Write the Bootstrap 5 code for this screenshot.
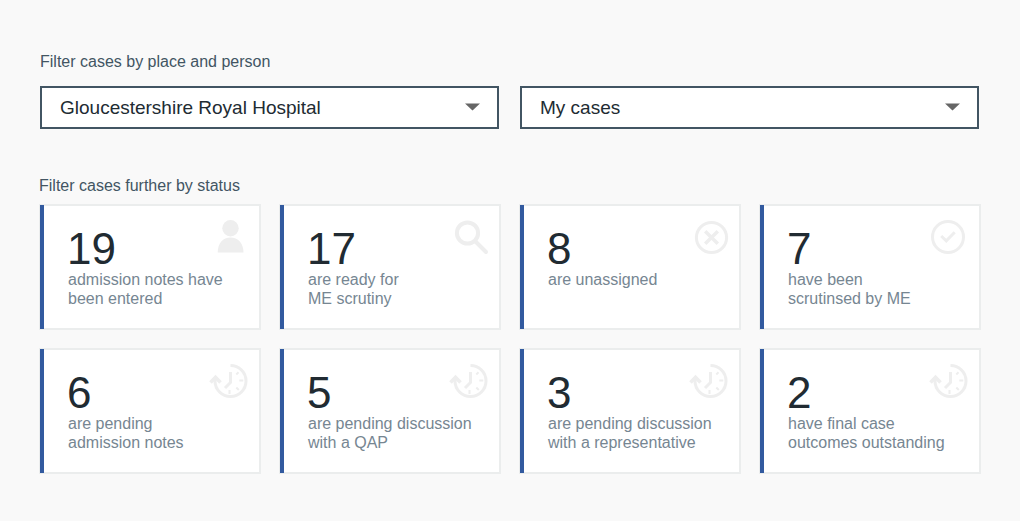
<!DOCTYPE html>
<html lang="en">
<head>
<meta charset="utf-8">
<meta name="viewport" content="width=device-width, initial-scale=1">
<title>Case filters</title>
<link href="https://cdn.jsdelivr.net/npm/bootstrap@5.3.0/dist/css/bootstrap.min.css" rel="stylesheet">
<style>
  body { background: #f9f9f9; font-family: "Liberation Sans", Arial, sans-serif; color: #425563; }
  .page { padding: 50px 39px 47px; }
  .filters { padding: 0 2px 0 1px; margin-bottom: 45px; }
  .filter-row { display: grid; grid-template-columns: 1fr 1fr; gap: 21px; margin-top: 12px; }
  .filter-title { display: block; margin: 0; font-size: 16px; line-height: 24px; font-weight: 400; }
  .case-select {
    height: 43px; padding: 0 48px 0 18px; border: 2px solid #425563; border-radius: 0;
    font-size: 19px; line-height: 24px; color: #212b32; background-color: #fff;
    background-image: url("data:image/svg+xml,%3Csvg xmlns='http://www.w3.org/2000/svg' viewBox='0 0 15 8'%3E%3Cpath fill='%23666' d='M0 .5h15L7.5 7.5z'/%3E%3C/svg%3E");
    background-size: 15px 8px; background-position: right 17px top 15px;
  }
  .status-grid { display: grid; grid-template-columns: repeat(4, 1fr); gap: 18px; margin-top: 6px; }
  .status-card {
    min-height: 126px; padding: 14px 10px 20px 27px; background: #fff;
    border: 2px solid #ebeded; color: #768692; font-size: 16px; line-height: 19px;
  }
  .status-card::before { content: ""; position: absolute; left: -1px; top: -1px; bottom: -1px; width: 4px; background: #325a9f; }
  .status-count { margin: 7px 0 0 -1px; font-size: 44px; line-height: 43px; color: #212b32; }
  .status-icon { width: 40px; height: 36px; color: #eee; }
  @media (max-width: 900px) { .status-grid { grid-template-columns: 1fr 1fr; } }
  @media (max-width: 560px) { .filter-row, .status-grid { grid-template-columns: 1fr; } }
</style>
</head>
<body>
<svg class="d-none" aria-hidden="true">
  <symbol id="clock" viewBox="0 0 40 36">
    <g fill="none" stroke="currentColor">
      <path stroke-width="3" d="M21.500 1.500A15.500 15.500 0 1 1 6 17V15.500"/>
      <path stroke-width="3.600" d="M1.500 18.500L6.500 13.300L11.500 18.500"/>
      <path stroke-width="3" d="M21.500 8V18.500L16 24"/>
      <path stroke-width="2" d="M27.300 10.500l2.200-2.200M30.300 16.500h4M27.300 23.500l2.500 2.500M20.500 26v4"/>
    </g>
  </symbol>
</svg>
<main class="page">
  <section class="filters">
    <label class="filter-title" for="place">Filter cases by place and person</label>
    <div class="filter-row">
      <select class="form-select case-select" id="place"><option>Gloucestershire Royal Hospital</option></select>
      <select class="form-select case-select" id="person" aria-label="Person"><option>My cases</option></select>
    </div>
  </section>

  <section>
    <h2 class="filter-title">Filter cases further by status</h2>
    <div class="status-grid">
      <a href="#" class="status-card position-relative text-decoration-none">
        <div class="d-flex justify-content-between"><div class="status-count">19</div>
          <svg class="status-icon" viewBox="0 0 40 36"><g fill="currentColor"><circle cx="21.500" cy="8.300" r="8.200"/><path d="M8.700 32.500C8.700 23.500 14 17.600 21.500 17.600S34.500 23.500 34.500 32.500Z"/></g></svg></div>
        <div>admission notes have<br>been entered</div>
      </a>
      <a href="#" class="status-card position-relative text-decoration-none">
        <div class="d-flex justify-content-between"><div class="status-count">17</div>
          <svg class="status-icon" viewBox="0 0 40 36"><g fill="none" stroke="currentColor" stroke-width="4"><circle cx="18.500" cy="13" r="10.600"/><path stroke-linecap="round" d="M26 21L37 32"/></g></svg></div>
        <div>are ready for<br>ME scrutiny</div>
      </a>
      <a href="#" class="status-card position-relative text-decoration-none">
        <div class="d-flex justify-content-between"><div class="status-count">8</div>
          <svg class="status-icon" viewBox="0 0 40 36"><g fill="none" stroke="currentColor"><circle cx="22.500" cy="17.500" r="15.100" stroke-width="3"/><path stroke-width="3.500" d="M16.200 11.200l12.600 12.600M28.800 11.200L16.200 23.800"/></g></svg></div>
        <div>are unassigned</div>
      </a>
      <a href="#" class="status-card position-relative text-decoration-none">
        <div class="d-flex justify-content-between"><div class="status-count">7</div>
          <svg class="status-icon" viewBox="0 0 40 36"><g fill="none" stroke="currentColor" stroke-width="3"><circle cx="19" cy="17" r="15.500"/><path d="M12.200 16L17.300 20.800L25.700 12.300"/></g></svg></div>
        <div>have been<br>scrutinsed by ME</div>
      </a>
      <a href="#" class="status-card position-relative text-decoration-none">
        <div class="d-flex justify-content-between"><div class="status-count">6</div><svg class="status-icon"><use href="#clock"/></svg></div>
        <div>are pending<br>admission notes</div>
      </a>
      <a href="#" class="status-card position-relative text-decoration-none">
        <div class="d-flex justify-content-between"><div class="status-count">5</div><svg class="status-icon"><use href="#clock"/></svg></div>
        <div>are pending discussion<br>with a QAP</div>
      </a>
      <a href="#" class="status-card position-relative text-decoration-none">
        <div class="d-flex justify-content-between"><div class="status-count">3</div><svg class="status-icon"><use href="#clock"/></svg></div>
        <div>are pending discussion<br>with a representative</div>
      </a>
      <a href="#" class="status-card position-relative text-decoration-none">
        <div class="d-flex justify-content-between"><div class="status-count">2</div><svg class="status-icon"><use href="#clock"/></svg></div>
        <div>have final case<br>outcomes outstanding</div>
      </a>
    </div>
  </section>
</main>
<script src="https://cdn.jsdelivr.net/npm/bootstrap@5.3.0/dist/js/bootstrap.bundle.min.js"></script>
</body>
</html>
